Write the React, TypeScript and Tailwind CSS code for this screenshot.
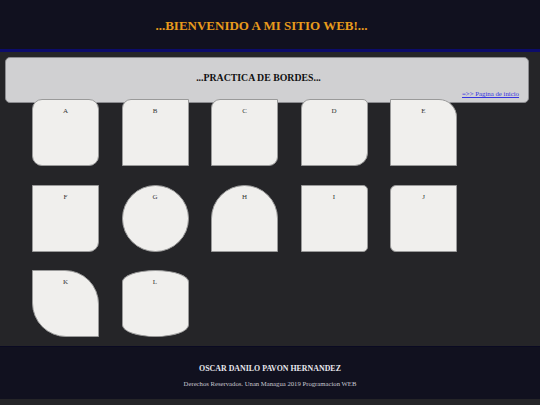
import React from "react";

const boxes: { l: string; cls: string }[] = [
  { l: "A", cls: "rounded-[10px]" },
  { l: "B", cls: "rounded-tl-[9px]" },
  { l: "C", cls: "rounded-tl-[9px] rounded-br-[9px]" },
  { l: "D", cls: "rounded-tl-[9px] rounded-tr-[5px] rounded-br-[13px]" },
  { l: "E", cls: "rounded-tr-[18px]" },
  { l: "F", cls: "rounded-br-[10px]" },
  { l: "G", cls: "rounded-full" },
  { l: "H", cls: "rounded-t-[50%]" },
  { l: "I", cls: "rounded-tr-[5px] rounded-br-[5px]" },
  { l: "J", cls: "rounded-tl-[6px] rounded-bl-[6px]" },
  { l: "K", cls: "rounded-tr-[34px] rounded-bl-[34px]" },
  { l: "L", cls: "rounded-[50%/12px]" },
];

export default function App() {
  return (
    <div className="w-[540px] h-[405px] bg-[#252528] flex flex-col font-['Liberation_Serif','Times_New_Roman',serif]">
      <header className="h-[52px] bg-[#11111f] border-b-[3px] border-[#0c0c6a] flex items-center justify-center pr-[17px] shrink-0">
        <h1 className="text-[13px] font-bold text-[#e89b1c] leading-none mt-[1px]">...BIENVENIDO A MI SITIO WEB!...</h1>
      </header>
      <main className="h-[294px] shrink-0 flex flex-col">
        <section className="mt-[5px] ml-[5px] w-[524px] h-[46px] bg-[#d0d0d2] rounded-[5px] border border-[#8c8c90] flex flex-col items-center pt-[15px] pr-[17px] relative">
          <h2 className="text-[9.8px] font-bold text-[#111] leading-none">...PRACTICA DE BORDES...</h2>
          <a href="#" className="absolute right-[9px] bottom-[4px] text-[6.8px] text-[#3434e0] underline leading-none">=&gt;&gt; Pagina de inicio</a>
        </section>
        <div className="ml-[32px] mt-[-4px] grid grid-cols-[repeat(5,67px)] gap-x-[22.5px] gap-y-[18.5px] relative">
          {boxes.map((b) => (
            <div key={b.l} className={`w-[67px] h-[67px] bg-[#f0efed] border border-[#9a9a9a] flex justify-center pt-[8px] ${b.cls}`}>
              <span className="text-[7px] text-[#333] leading-none">{b.l}</span>
            </div>
          ))}
        </div>
      </main>
      <footer className="h-[53px] bg-[#11111f] border-t border-[#0a0a22] flex flex-col items-center pt-[18px] shrink-0">
        <p className="text-[7.9px] font-bold text-[#e8e8ee] leading-none">OSCAR DANILO PAVON HERNANDEZ</p>
        <p className="text-[6.7px] text-[#c8c8d0] leading-none mt-[8px]">Derechos Reservados. Unan Managua 2019 Programacion WEB</p>
      </footer>
    </div>
  );
}
